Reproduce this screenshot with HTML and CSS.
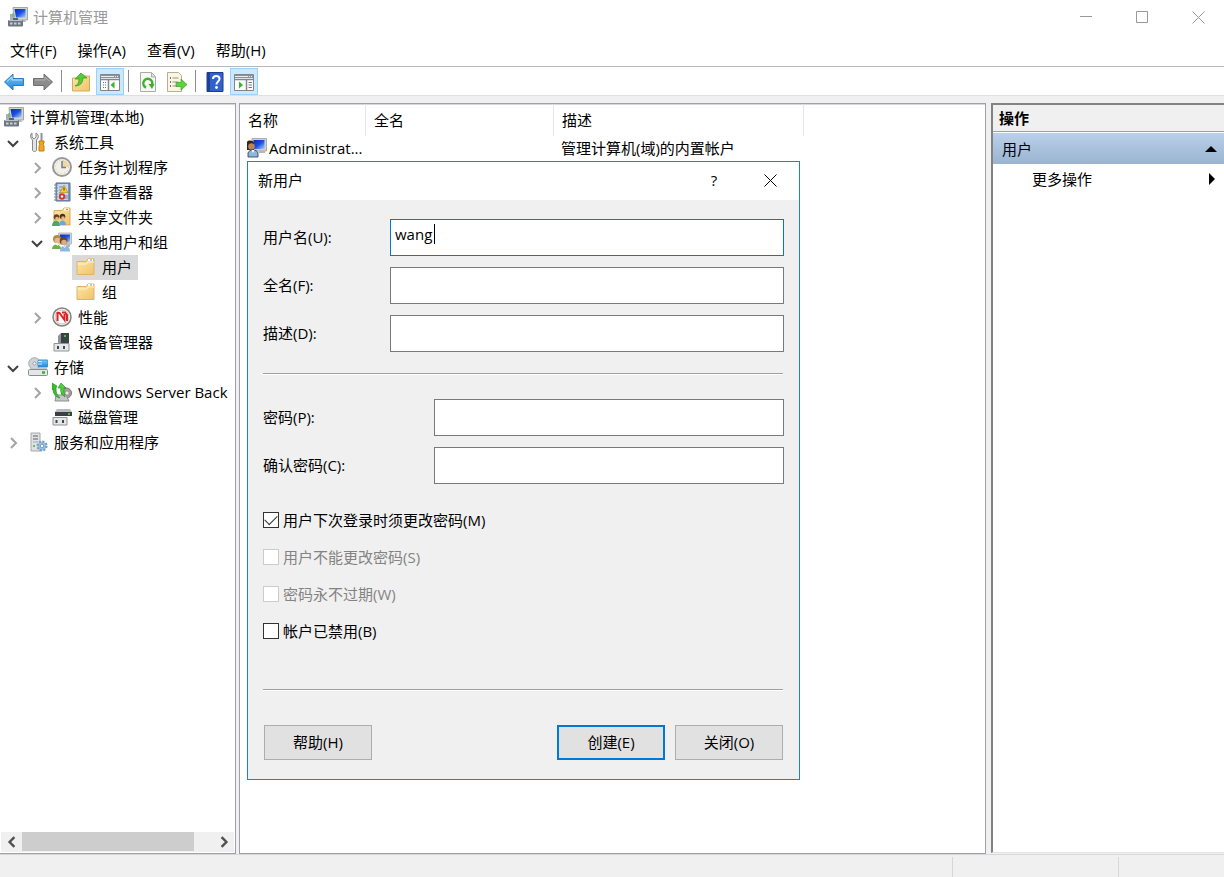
FILE: index.html
```html
<!DOCTYPE html>
<html lang="zh-CN">

<head>
    <meta charset="UTF-8">
    <meta name="viewport" content="width=device-width, initial-scale=1.0">
    <title>计算机管理</title>
    <link rel="stylesheet" href="styles.css">
</head>

<body>
    <!-- 图标库 -->
    <svg class="sprite" aria-hidden="true">
        <defs>
            <linearGradient id="screen" x1="0" y1="0" x2="1" y2="1">
                <stop offset="0" stop-color="#0a2bc4" />
                <stop offset=".5" stop-color="#1c4fe0" />
                <stop offset="1" stop-color="#a8d4f8" />
            </linearGradient>
            <linearGradient id="gold" x1="0" y1="0" x2="1" y2="1">
                <stop offset="0" stop-color="#fde6a4" />
                <stop offset="1" stop-color="#f0c36c" />
            </linearGradient>
            <linearGradient id="blue" x1="0" y1="0" x2="0" y2="1">
                <stop offset="0" stop-color="#7cc8f6" />
                <stop offset="1" stop-color="#1d86d8" />
            </linearGradient>
        </defs>
        <symbol id="i-computer" viewBox="0 0 20 20">
            <path d="M5 .500h14.500V13H6z" fill="#d3d3d0" stroke="#a5a5a2" />
            <path d="M6.500 2h11v8.500H8z" fill="url(#screen)" />
            <path d="M12 13h5l1 2h-6z" fill="#b5b7b9" />
            <path d="M2 7h5v6H2z" fill="#a9b3bd" />
            <path d="M5 6v4" stroke="#43c53c" />
            <rect x="0" y="13" width="15" height="6.500" rx="1" fill="#6c7781" />
            <path d="M1 13.500h13" stroke="#b9c1c9" />
            <path d="M2 16.500h2.500M6 16.500h2.500M10 16.500h2.500" stroke="#c8ced4" stroke-width="2" />
            <path d="M5 11h5v2H5z" fill="#59636e" />
        </symbol>
        <symbol id="i-tools" viewBox="0 0 20 20">
            <path d="M4 1v4l2 2 2-2V1c2 1 3 3 2 5L8.500 8v10c0 2-4 2-4 0V8L3 6C2 4 2.500 2 4 1z" fill="#e2e4e5" stroke="#85898c" />
            <path d="M13.500 1v8" stroke="#8f9396" stroke-width="2" />
            <path d="M11 9h5v2l-1 1 1 2v5h-5v-5l1-2-1-1z" fill="#f2a51f" stroke="#c97b13" />
        </symbol>
        <symbol id="i-clock" viewBox="0 0 20 20">
            <circle cx="10" cy="10" r="9" fill="#f4f1e4" stroke="#999" stroke-width="2" />
            <path d="M10 10V3a7 7 0 0 1 7 7z" fill="#f5d79a" />
            <circle cx="10" cy="10" r="6.500" fill="none" stroke="#bfc6cf" stroke-dasharray="1 2.400" />
            <path d="M10 4v6.500h4" fill="none" stroke="#6480aa" stroke-width="1.500" />
        </symbol>
        <symbol id="i-events" viewBox="0 0 20 20">
            <path d="M4 1h14v18H4z" fill="#7c98bc" stroke="#56708f" />
            <path d="M5 2h11v16H5z" fill="#c6d8ec" />
            <path d="M2 3h4M2 6h4M2 9h4M2 12h4M2 15h4M2 18h4" stroke="#7d8894" />
            <path d="M7 5h4M7 8h3M7 11h2M13 16h3M13 14h3" stroke="#6c8ab0" />
            <path d="M12 3l4 7.500H8z" fill="#ffc928" stroke="#b98a10" stroke-width=".6" />
            <path d="M12 5.500V8.500" stroke="#333" />
            <circle cx="10" cy="14.500" r="3.200" fill="#d93434" />
            <circle cx="10" cy="14.500" r="1.200" fill="#fff" />
        </symbol>
        <symbol id="i-shared" viewBox="0 0 20 20">
            <path d="M2 3.500h8l2-2.500h6v17H2z" fill="url(#gold)" stroke="#d9ad59" />
            <path d="M12 2.500h5" stroke="#fff" stroke-width="2" />
            <path d="M14 2.500h2" stroke="#5aa4e0" />
            <circle cx="4.500" cy="10" r="2.800" fill="#68401f" />
            <circle cx="10.500" cy="9.500" r="2.800" fill="#4f3018" />
            <circle cx="5" cy="11.500" r="1.800" fill="#e8b78b" />
            <circle cx="11" cy="11" r="1.800" fill="#e8b78b" />
            <path d="M0 19c0-7 8-7 8 0z" fill="#4ca95a" />
            <path d="M7 18c0-6 7-6 7 0z" fill="#6fa6da" />
        </symbol>
        <symbol id="i-users" viewBox="0 0 20 20">
            <path d="M6.500 1h13v11h-13z" fill="#d3d3d0" stroke="#b9bcc0" />
            <path d="M8 2.500h10v8H8z" fill="url(#screen)" />
            <path d="M14 12h4v3h-4z" fill="#b5b7b9" />
            <circle cx="5" cy="7" r="4" fill="#b58a45" />
            <circle cx="5.500" cy="8.500" r="2.800" fill="#e6b98c" />
            <circle cx="11.500" cy="9" r="3.800" fill="#6b4526" />
            <circle cx="12" cy="10.500" r="2.800" fill="#dcab80" />
            <path d="M0 17c0-6 9-6 9 0z" fill="#6fb04b" />
            <path d="M8 19.500c0-8 10-8 10 0z" fill="#8fb6e0" />
            <path d="M4 11.500l1.500 2 1.500-2M11 13.500l1.500 2 1.500-2" fill="none" stroke="#fff" />
        </symbol>
        <symbol id="i-user" viewBox="0 0 20 20">
            <path d="M5 .500h14.500V13H5z" fill="#cfcfcc" stroke="#a9acb0" />
            <path d="M6.500 2h11v9h-11z" fill="url(#screen)" />
            <path d="M12 13h6v2h-6z" fill="#b5b7b9" />
            <path d="M0 4c1-2 6-2 7 1v7H0z" fill="#2e241d" />
            <circle cx="4.500" cy="8.500" r="3.300" fill="#b98559" />
            <path d="M1 19v-4c1-4 9-4 10 0v4z" fill="#8db8de" stroke="#23384d" stroke-width=".8" />
            <path d="M4.500 12l1.500 3 1.500-3" fill="#fff" />
        </symbol>
        <symbol id="i-folder" viewBox="0 0 20 20">
            <path d="M1 4.500h9L12 2h6v15.500H1z" fill="url(#gold)" stroke="#ddb36a" />
            <path d="M12 3h5" stroke="#fff" stroke-width="2" />
            <path d="M14 3h2" stroke="#4d9adf" />
            <path d="M1.500 7h9l1.500-2h6" fill="none" stroke="#fff3cf" />
        </symbol>
        <symbol id="i-perf" viewBox="0 0 20 20">
            <circle cx="10" cy="10" r="9" fill="#fbfbfb" stroke="#85807c" stroke-width="1.500" />
            <circle cx="10" cy="10" r="7" fill="none" stroke="#c3c3c3" />
            <path d="M5.500 14V6h2l5 7V7M10 5.500h3l2 2.500v6" fill="none" stroke="#dd2222" stroke-width="2" />
        </symbol>
        <symbol id="i-device" viewBox="0 0 20 20">
            <path d="M9 1h8v12H9z" fill="#3c4146" />
            <path d="M9 1l-3 3v8h3z" fill="#8d9296" />
            <circle cx="13" cy="4" r="1" fill="#56e04b" />
            <path d="M2 11.500h15V19H2z" fill="#e5e7e8" stroke="#8f9497" />
            <path d="M5 14h2v3H5zM11 14h2v3h-2z" fill="#43484c" />
        </symbol>
        <symbol id="i-storage" viewBox="0 0 20 20">
            <circle cx="6.500" cy="6.500" r="5.800" fill="#d0d3d5" stroke="#a5a9ac" />
            <circle cx="6.500" cy="6.500" r="1.500" fill="#fff" stroke="#999da0" />
            <rect x="10" y="3" width="10" height="7" rx="1" fill="url(#blue)" stroke="#3b8ccf" />
            <path d="M10 4.500h4M10 7h4" stroke="#c8ecff" />
            <path d="M2 11h17v2H2z" fill="#c3c9ce" />
            <rect x=".5" y="12.500" width="19" height="6" rx="1" fill="#e4e6e7" stroke="#888d91" />
            <path d="M14 15.500h3" stroke="#37b52e" stroke-width="2.500" />
        </symbol>
        <symbol id="i-backup" viewBox="0 0 20 20">
            <circle cx="14.500" cy="11" r="5" fill="#a6a09a" stroke="#7b7672" />
            <circle cx="15" cy="11" r="1.500" fill="#eee" />
            <path d="M4 13h10l3 6H3z" fill="#c4c8cb" stroke="#8b9093" />
            <path d="M0 1l5 3-1 2c0 5 1 7 4 10-5-1-7-5-7-9L0 8z" fill="#39bd2d" stroke="#218a1a" stroke-width=".6" />
            <path d="M9 1l5 5h-2c0 4 0 6 1 9-4-3-5-6-4-9H6z" fill="#4bd03c" stroke="#218a1a" stroke-width=".6" />
        </symbol>
        <symbol id="i-disk" viewBox="0 0 20 20">
            <path d="M5 2h13l2 3H3z" fill="#b8bbbd" />
            <path d="M3 5h17v4H3z" fill="#3c4044" />
            <circle cx="17" cy="7" r="1" fill="#56e04b" />
            <path d="M1 10.500h14V18H1z" fill="#e5e7e8" stroke="#8f9497" />
            <path d="M3.500 13h2v3h-2zM10 13h2v3h-2z" fill="#43484c" />
        </symbol>
        <symbol id="i-services" viewBox="0 0 20 20">
            <path d="M3 1h9v18H3z" fill="#dfe2e4" stroke="#a4a9ad" />
            <path d="M5 4h5M5 7h5" stroke="#596168" />
            <path d="M5 10h5" stroke="#a4a9ad" />
            <circle cx="6" cy="14" r="1" fill="#3bb632" />
            <circle cx="14" cy="14" r="4.500" fill="#9dc0de" stroke="#6f9dc6" stroke-width="2" stroke-dasharray="2 1.500" />
            <circle cx="14" cy="14" r="1.800" fill="#fff" stroke="#6f9dc6" />
        </symbol>
        <symbol id="i-back" viewBox="0 0 20 20">
            <path d="M.500 10L9 2v4.500h10.500v7H9V18z" fill="url(#blue)" stroke="#2c7dbd" />
            <path d="M3 9.500l5-4.500v3h10" fill="none" stroke="#b6e2fb" />
        </symbol>
        <symbol id="i-forward" viewBox="0 0 20 20">
            <path d="M19.500 10L11 2v4.500H.500v7H11V18z" fill="#8c8c8c" stroke="#6e6e6e" />
            <path d="M2 8h10V5l5 4.500" fill="none" stroke="#b4b4b4" />
        </symbol>
        <symbol id="i-up" viewBox="0 0 20 20">
            <path d="M1.500 6h8l2-2h7v15h-17z" fill="url(#gold)" stroke="#d9aa55" />
            <path d="M4 14c3-1 4-4 4-7H4l6-6 6 5h-4c0 5-3 8-8 8z" fill="#55cb35" stroke="#2f9a1d" stroke-width=".7" />
        </symbol>
        <symbol id="i-pane-left" viewBox="0 0 20 20">
            <path d="M.500 2.500h19v16H.500z" fill="#fff" stroke="#80868c" />
            <path d="M1 3h18v3H1z" fill="#8c949b" />
            <path d="M1 4.500h13M15 4.500h1M17 4.500h1" stroke="#e9edf0" />
            <path d="M1 7.500h18M8.500 8v10" stroke="#80868c" stroke-width="1.500" />
            <path d="M3 10.500h3M3 13h3M3 15.500h3" stroke="#4a7fc0" stroke-dasharray="1 1 3" />
            <path d="M14.500 9.500v7l-4-3.500z" fill="#35b625" />
        </symbol>
        <symbol id="i-pane-right" viewBox="0 0 20 20">
            <path d="M.500 2.500h19v16H.500z" fill="#fff" stroke="#80868c" />
            <path d="M1 3h18v3H1z" fill="#8c949b" />
            <path d="M1 4.500h13M15 4.500h1M17 4.500h1" stroke="#e9edf0" />
            <path d="M1 7.500h18M12.500 8v10" stroke="#80868c" stroke-width="1.500" />
            <path d="M14.500 10.500h3.500M14.500 13h3.500M14.500 15.500h3.500" stroke="#6e7d8c" />
            <path d="M5 9.500v7l4-3.500z" fill="#35b625" />
        </symbol>
        <symbol id="i-refresh" viewBox="0 0 20 20">
            <path d="M2.500.500h11l4 4v15h-15z" fill="#f7f7f4" stroke="#a9aba9" />
            <path d="M13.500 1v4h4" fill="#e0e0dc" stroke="#a9aba9" />
            <path d="M8 15.500A4.500 4.500 0 1 1 14 13" fill="none" stroke="#3eb02c" stroke-width="2.500" />
            <path d="M10.500 12h6l-2.500 5z" fill="#3eb02c" />
        </symbol>
        <symbol id="i-export" viewBox="0 0 20 20">
            <path d="M.500.500h11l3 3v16H.500z" fill="#fdf6df" stroke="#b5ae98" />
            <path d="M3 6h1M3 10h1M3 14h1" stroke="#444" stroke-width="1.500" />
            <path d="M5.500 6h6M5.500 10h6M5.500 14h6" stroke="#8a93a0" />
            <path d="M9 10.500h5V7l6 5.500-6 5.500v-3.500H9z" fill="#5cd23c" stroke="#3b9f25" stroke-width=".7" />
        </symbol>
        <symbol id="i-help" viewBox="0 0 20 20">
            <path d="M2 .500h16v19H2z" fill="#3161cf" stroke="#1d3d91" />
            <path d="M2 1h3v18H2z" fill="#1f4097" />
            <path d="M8 7c0-4 6.500-4 6.500 0 0 2.500-3 2.500-3 5.500" fill="none" stroke="#fff" stroke-width="2" />
            <circle cx="11.500" cy="15.500" r="1.400" fill="#fff" />
        </symbol>
        <symbol id="i-closed" viewBox="0 0 12 12">
            <path d="M4 1l5 5-5 5" fill="none" stroke="#a3a3a3" stroke-width="2" />
        </symbol>
        <symbol id="i-open" viewBox="0 0 12 12">
            <path d="M1 4l5 5 5-5" fill="none" stroke="#404040" stroke-width="2" />
        </symbol>
        <symbol id="i-close" viewBox="0 0 13 13">
            <path d="M.500.500l12 12M12.500.500l-12 12" fill="none" stroke="currentColor" />
        </symbol>
    </svg>

    <header class="titlebar">
        <svg class="icon"><use href="#i-computer" /></svg>
        <h1>计算机管理</h1>
        <div class="window-btns">
            <button type="button" aria-label="最小化"><svg viewBox="0 0 13 13"><path d="M0 5.500h12" stroke="currentColor" /></svg></button>
            <button type="button" aria-label="最大化"><svg viewBox="0 0 13 13"><path d="M.500.500h11v11H.500z" fill="none" stroke="currentColor" /></svg></button>
            <button type="button" aria-label="关闭"><svg><use href="#i-close" /></svg></button>
        </div>
    </header>

    <nav class="menubar">
        <button type="button">文件(F)</button>
        <button type="button">操作(A)</button>
        <button type="button">查看(V)</button>
        <button type="button">帮助(H)</button>
    </nav>

    <div class="toolbar">
        <button type="button" aria-label="后退"><svg class="icon"><use href="#i-back" /></svg></button>
        <button type="button" aria-label="前进"><svg class="icon"><use href="#i-forward" /></svg></button>
        <span class="sep"></span>
        <button type="button" aria-label="向上"><svg class="icon"><use href="#i-up" /></svg></button>
        <button type="button" class="on" aria-label="控制台树"><svg class="icon"><use href="#i-pane-left" /></svg></button>
        <span class="sep"></span>
        <button type="button" aria-label="刷新"><svg class="icon"><use href="#i-refresh" /></svg></button>
        <button type="button" aria-label="导出列表"><svg class="icon"><use href="#i-export" /></svg></button>
        <span class="sep"></span>
        <button type="button" aria-label="帮助"><svg class="icon"><use href="#i-help" /></svg></button>
        <button type="button" class="on" aria-label="操作窗格"><svg class="icon"><use href="#i-pane-right" /></svg></button>
    </div>

    <main class="panes">
        <!-- 左侧：控制台树 -->
        <section class="pane tree-pane">
            <ul class="tree">
                <li class="root"><a href="#" class="node"><svg class="icon"><use href="#i-computer" /></svg>计算机管理(本地)</a></li>
                <li class="l1"><svg class="chevron"><use href="#i-open" /></svg><a href="#" class="node"><svg class="icon"><use href="#i-tools" /></svg>系统工具</a></li>
                <li class="l2"><svg class="chevron"><use href="#i-closed" /></svg><a href="#" class="node"><svg class="icon"><use href="#i-clock" /></svg>任务计划程序</a></li>
                <li class="l2"><svg class="chevron"><use href="#i-closed" /></svg><a href="#" class="node"><svg class="icon"><use href="#i-events" /></svg>事件查看器</a></li>
                <li class="l2"><svg class="chevron"><use href="#i-closed" /></svg><a href="#" class="node"><svg class="icon"><use href="#i-shared" /></svg>共享文件夹</a></li>
                <li class="l2"><svg class="chevron"><use href="#i-open" /></svg><a href="#" class="node"><svg class="icon"><use href="#i-users" /></svg>本地用户和组</a></li>
                <li class="l3"><a href="#" class="node selected"><svg class="icon"><use href="#i-folder" /></svg>用户</a></li>
                <li class="l3"><a href="#" class="node"><svg class="icon"><use href="#i-folder" /></svg>组</a></li>
                <li class="l2"><svg class="chevron"><use href="#i-closed" /></svg><a href="#" class="node"><svg class="icon"><use href="#i-perf" /></svg>性能</a></li>
                <li class="l2"><svg class="chevron"></svg><a href="#" class="node"><svg class="icon"><use href="#i-device" /></svg>设备管理器</a></li>
                <li class="l1"><svg class="chevron"><use href="#i-open" /></svg><a href="#" class="node"><svg class="icon"><use href="#i-storage" /></svg>存储</a></li>
                <li class="l2"><svg class="chevron"><use href="#i-closed" /></svg><a href="#" class="node"><svg class="icon"><use href="#i-backup" /></svg>Windows Server Back</a></li>
                <li class="l2"><svg class="chevron"></svg><a href="#" class="node"><svg class="icon"><use href="#i-disk" /></svg>磁盘管理</a></li>
                <li class="l1"><svg class="chevron"><use href="#i-closed" /></svg><a href="#" class="node"><svg class="icon"><use href="#i-services" /></svg>服务和应用程序</a></li>
            </ul>
            <div class="scrollbar">
                <button type="button" aria-label="向左滚动"><svg viewBox="0 0 10 10"><path d="M7 1L3 5l4 4" /></svg></button>
                <div class="track"><div class="thumb"></div></div>
                <button type="button" aria-label="向右滚动"><svg viewBox="0 0 10 10"><path d="M3 1l4 4-4 4" /></svg></button>
            </div>
        </section>

        <!-- 中间：用户列表 -->
        <section class="pane list-pane">
            <table class="list">
                <colgroup>
                    <col class="col-name">
                    <col class="col-full">
                    <col class="col-desc">
                    <col>
                </colgroup>
                <thead>
                    <tr>
                        <th>名称</th>
                        <th>全名</th>
                        <th>描述</th>
                        <td></td>
                    </tr>
                </thead>
                <tbody>
                    <tr>
                        <td><div class="user"><svg class="icon"><use href="#i-user" /></svg>Administrat...</div></td>
                        <td></td>
                        <td>管理计算机(域)的内置帐户</td>
                        <td></td>
                    </tr>
                </tbody>
            </table>
        </section>

        <!-- 右侧：操作 -->
        <aside class="actions">
            <h2>操作</h2>
            <button type="button" class="group">用户<svg viewBox="0 0 12 12"><path d="M0 9l6-6 6 6z" /></svg></button>
            <button type="button" class="more">更多操作<svg viewBox="0 0 12 12"><path d="M4 0l6 6-6 6z" /></svg></button>
        </aside>
    </main>

    <footer class="statusbar">
        <span></span>
        <span class="part-mid"></span>
        <span class="part-end"></span>
    </footer>

    <!-- 新用户对话框 -->
    <form class="dialog" role="dialog" aria-labelledby="dialog-title">
        <div class="dialog-title">
            <h2 id="dialog-title">新用户</h2>
            <button type="button">?</button>
            <button type="button" aria-label="关闭"><svg><use href="#i-close" /></svg></button>
        </div>
        <div class="dialog-body">
            <div class="fields">
                <label for="username">用户名(U):</label>
                <div class="edit"><input type="text" id="username" class="active" value="wang"><i class="caret"></i></div>
                <label for="fullname">全名(F):</label>
                <input type="text" id="fullname">
                <label for="desc">描述(D):</label>
                <input type="text" id="desc">
            </div>
            <hr>
            <div class="fields passwords">
                <label for="pwd">密码(P):</label>
                <input type="password" id="pwd">
                <label for="pwd2">确认密码(C):</label>
                <input type="password" id="pwd2">
            </div>
            <div class="checks">
                <label><input type="checkbox" checked>用户下次登录时须更改密码(M)</label>
                <label class="disabled"><input type="checkbox" disabled>用户不能更改密码(S)</label>
                <label class="disabled"><input type="checkbox" disabled>密码永不过期(W)</label>
                <label><input type="checkbox">帐户已禁用(B)</label>
            </div>
            <hr>
            <div class="buttons">
                <button type="button" class="btn help">帮助(H)</button>
                <button type="button" class="btn primary">创建(E)</button>
                <button type="button" class="btn">关闭(O)</button>
            </div>
        </div>
    </form>
</body>

</html>
```
FILE: styles.css
```css
* {
    margin: 0;
    padding: 0;
    box-sizing: border-box;
}

body {
    display: flex;
    flex-direction: column;
    height: 100vh;
    overflow: hidden;
    position: relative;
    background-color: #f0f0f0;
    color: #000;
    font: 15px/22px "Open Sans", "Noto Sans CJK SC", sans-serif;
}

button,
input {
    font: inherit;
    color: inherit;
}

button {
    border: 0;
    background: none;
}

a {
    color: inherit;
    text-decoration: none;
}

.sprite {
    position: absolute;
    width: 0;
    height: 0;
}

.icon {
    flex: none;
    width: 20px;
    height: 20px;
}

/* 标题栏 */
.titlebar {
    display: flex;
    align-items: center;
    height: 34px;
    padding-left: 8px;
    gap: 5px;
    background-color: #fff;
    color: #999;
}

.titlebar h1 {
    flex: 1;
    font-size: 15px;
    font-weight: 400;
}

.window-btns {
    display: flex;
    gap: 6px;
    padding-right: 1px;
}

.window-btns button {
    display: flex;
    align-items: center;
    justify-content: center;
    width: 50px;
    height: 34px;
}

.window-btns svg,
.dialog-title svg {
    width: 13px;
    height: 13px;
}

/* 菜单 */
.menubar {
    display: flex;
    gap: 21px;
    height: 33px;
    padding-left: 10px;
    background-color: #fff;
    border-bottom: 1px solid #b9b9b9;
}

/* 工具栏 */
.toolbar {
    display: flex;
    align-items: center;
    gap: 1px;
    height: 29px;
    background-color: #fff;
    border-bottom: 1px solid #dfdfdf;
}

.toolbar button {
    display: flex;
    align-items: center;
    justify-content: center;
    width: 28px;
    height: 27px;
    padding-top: 2px;
}

.toolbar .on {
    background-color: #cce8ff;
    border: 1px solid #99d1ff;
}

.toolbar .sep {
    width: 1px;
    height: 22px;
    margin: 0 4px 0 3px;
    background-color: #8d8d8d;
}

/* 三个窗格 */
.panes {
    flex: 1;
    display: flex;
    min-height: 0;
    padding-top: 7px;
}

.pane {
    background-color: #fff;
    border: 1px solid #a0a0a8;
    box-shadow: inset 0 1px #d8d8dc;
    overflow: hidden;
}

.tree-pane {
    display: flex;
    flex-direction: column;
    flex: none;
    width: 236px;
    margin-right: 3px;
    border-left: 0;
}

.tree {
    flex: 1;
    padding-top: 1px;
    list-style: none;
    overflow: hidden;
}

.tree li {
    display: flex;
    align-items: center;
    height: 25px;
    white-space: nowrap;
}

.tree .l1 {
    padding-left: 2px;
}

.tree .l2 {
    padding-left: 26px;
}

.tree .l3 {
    padding-left: 72px;
}

.tree .chevron {
    flex: none;
    width: 22px;
    height: 12px;
}

.tree .node {
    display: flex;
    align-items: center;
    gap: 6px;
    height: 25px;
    padding: 0 6px 2px 4px;
}

.tree .selected {
    background-color: #d9d9d9;
}

.scrollbar {
    display: flex;
    height: 20px;
    margin: 0 1px 1px;
    background-color: #f0f0f0;
}

.scrollbar button {
    display: flex;
    align-items: center;
    justify-content: center;
    width: 21px;
}

.scrollbar svg {
    width: 12px;
    height: 12px;
    fill: none;
    stroke: #505050;
    stroke-width: 2;
}

.scrollbar .track {
    flex: 1;
}

.scrollbar .thumb {
    width: 90%;
    height: 19px;
    background-color: #cdcdcd;
}

.list-pane {
    flex: 1;
}

.list {
    width: 100%;
    table-layout: fixed;
    border-collapse: separate;
    border-spacing: 0;
    white-space: nowrap;
}

.col-name {
    width: 126px;
}

.col-full {
    width: 188px;
}

.col-desc {
    width: 250px;
}

.list th {
    height: 32px;
    padding-left: 8px;
    border-right: 1px solid #e5e5e5;
    font-weight: 400;
    text-align: left;
}

.list tbody td {
    height: 25px;
    padding: 0 0 2px 7px;
}

.list .user {
    display: flex;
    align-items: center;
    gap: 2px;
}

/* 操作窗格 */
.actions {
    flex: none;
    width: 233px;
    margin: 0 0 1px 5px;
    background-color: #fff;
    border-top: 2px solid #828282;
    border-left: 2px solid #828282;
    border-bottom: 1px solid #e3e3e3;
}

.actions h2 {
    height: 27px;
    padding-left: 6px;
    background-color: #f0f0f0;
    border-bottom: 1px solid #a0a0a0;
    font-size: 15px;
    line-height: 26px;
}

.actions button {
    display: flex;
    align-items: center;
    justify-content: space-between;
    width: 100%;
    height: 30px;
    padding-right: 7px;
}

.actions svg {
    width: 12px;
    height: 12px;
}

.actions .group {
    height: 31px;
    margin-top: 1px;
    padding-left: 9px;
    background: linear-gradient(#b9d1ea, #9ab3cf);
}

.actions .more {
    padding-left: 39px;
}

/* 状态栏 */
.statusbar {
    display: flex;
    height: 23px;
    padding-top: 2px;
    border-top: 1px solid #d7d7d7;
}

.statusbar span {
    flex: 1;
}

.statusbar .part-mid {
    flex: none;
    width: 166px;
    border-left: 1px solid #d7d7d7;
}

.statusbar .part-end {
    flex: none;
    width: 106px;
    border-left: 1px solid #d7d7d7;
}

/* 对话框 */
.dialog {
    position: absolute;
    left: 247px;
    top: 161px;
    width: 553px;
    background-color: #f0f0f0;
    border: 1px solid #1883d7;
}

.dialog-title {
    display: flex;
    align-items: center;
    height: 38px;
    padding: 0 1px 2px 10px;
    background-color: #fff;
}

.dialog-title h2 {
    flex: 1;
    font-size: 15px;
    font-weight: 400;
}

.dialog-title button {
    display: flex;
    align-items: center;
    justify-content: center;
    width: 56px;
    height: 36px;
}

.dialog-body {
    padding: 19px 15px;
}

.fields {
    display: grid;
    grid-template-columns: 127px 1fr;
    gap: 11px 0;
    align-items: center;
}

.passwords {
    grid-template-columns: 171px 1fr;
}

.fields label {
    padding-bottom: 2px;
}

.edit {
    position: relative;
}

.fields input {
    display: block;
    width: 100%;
    height: 37px;
    padding: 0 4px 8px;
    background-color: #fff;
    border: 1px solid #7a7a7a;
    outline: 0;
}

.fields .active {
    border-color: #0078d7;
}

/* 光标 */
.caret {
    position: absolute;
    left: 44px;
    top: 5px;
    width: 1px;
    height: 20px;
    background-color: #000;
}

hr {
    height: 2px;
    margin: 21px 1px 24px 0;
    border: 0;
    border-top: 1px solid #a0a0a0;
    background-color: #fff;
}

.checks {
    display: grid;
    gap: 15px;
    margin: 25px 0 47px;
}

.checks label {
    display: flex;
    align-items: center;
    justify-self: start;
    gap: 4px;
}

.checks input {
    appearance: none;
    width: 16px;
    height: 16px;
    background-color: #fff;
    border: 1px solid #333;
}

.checks input:checked::before {
    content: "";
    display: block;
    width: 11px;
    height: 6px;
    margin: 2px 0 0 1px;
    border-left: 1px solid #333;
    border-bottom: 1px solid #333;
    transform: rotate(-45deg);
}

.checks .disabled {
    color: #838383;
}

.checks .disabled input {
    border-color: #ccc;
}

.buttons {
    display: flex;
    gap: 10px;
    margin-top: 34px;
    padding: 0 1px;
}

.btn {
    width: 108px;
    height: 35px;
    padding-bottom: 2px;
    background-color: #e1e1e1;
    border: 1px solid #adadad;
}

.btn.help {
    margin-right: auto;
}

.btn.primary {
    border: 2px solid #0078d7;
}
```
